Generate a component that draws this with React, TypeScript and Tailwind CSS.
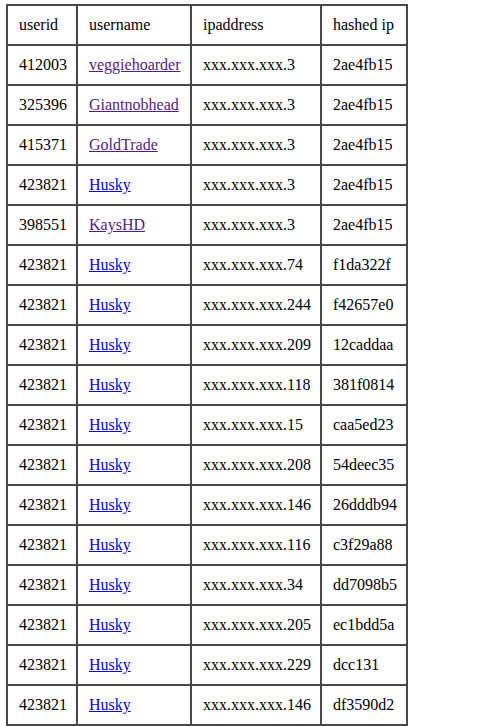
type Row = {
  userid: string;
  username: string;
  visited: boolean;
  ip: string;
  hash: string;
};

const rows: Row[] = [
  { userid: '412003', username: 'veggiehoarder', visited: true, ip: 'xxx.xxx.xxx.3', hash: '2ae4fb15' },
  { userid: '325396', username: 'Giantnobhead', visited: true, ip: 'xxx.xxx.xxx.3', hash: '2ae4fb15' },
  { userid: '415371', username: 'GoldTrade', visited: true, ip: 'xxx.xxx.xxx.3', hash: '2ae4fb15' },
  { userid: '423821', username: 'Husky', visited: false, ip: 'xxx.xxx.xxx.3', hash: '2ae4fb15' },
  { userid: '398551', username: 'KaysHD', visited: true, ip: 'xxx.xxx.xxx.3', hash: '2ae4fb15' },
  { userid: '423821', username: 'Husky', visited: false, ip: 'xxx.xxx.xxx.74', hash: 'f1da322f' },
  { userid: '423821', username: 'Husky', visited: false, ip: 'xxx.xxx.xxx.244', hash: 'f42657e0' },
  { userid: '423821', username: 'Husky', visited: false, ip: 'xxx.xxx.xxx.209', hash: '12caddaa' },
  { userid: '423821', username: 'Husky', visited: false, ip: 'xxx.xxx.xxx.118', hash: '381f0814' },
  { userid: '423821', username: 'Husky', visited: false, ip: 'xxx.xxx.xxx.15', hash: 'caa5ed23' },
  { userid: '423821', username: 'Husky', visited: false, ip: 'xxx.xxx.xxx.208', hash: '54deec35' },
  { userid: '423821', username: 'Husky', visited: false, ip: 'xxx.xxx.xxx.146', hash: '26dddb94' },
  { userid: '423821', username: 'Husky', visited: false, ip: 'xxx.xxx.xxx.116', hash: 'c3f29a88' },
  { userid: '423821', username: 'Husky', visited: false, ip: 'xxx.xxx.xxx.34', hash: 'dd7098b5' },
  { userid: '423821', username: 'Husky', visited: false, ip: 'xxx.xxx.xxx.205', hash: 'ec1bdd5a' },
  { userid: '423821', username: 'Husky', visited: false, ip: 'xxx.xxx.xxx.229', hash: 'dcc131' },
  { userid: '423821', username: 'Husky', visited: false, ip: 'xxx.xxx.xxx.146', hash: 'df3590d2' },
];

const cell = 'border-2 border-[#474747] px-[11px] h-[40px] align-middle text-left font-normal';

export default function App() {
  return (
    <div className="bg-white min-h-screen pt-[4px] pl-[6px] text-black text-[16px] font-['Liberation_Serif',serif]">
      <table className="border-collapse border-2 border-[#474747] w-[400px] table-fixed">
        <colgroup>
          <col className="w-[70px]" />
          <col className="w-[114px]" />
          <col className="w-[130px]" />
          <col className="w-[86px]" />
        </colgroup>
        <thead>
          <tr>
            <th className={cell}>userid</th>
            <th className={cell}>username</th>
            <th className={cell}>ipaddress</th>
            <th className={cell}>hashed ip</th>
          </tr>
        </thead>
        <tbody>
          {rows.map((r, i) => (
            <tr key={i}>
              <td className={cell}>{r.userid}</td>
              <td className={cell}>
                <a
                  href="#"
                  className={r.visited ? 'underline text-[#551a8b]' : 'underline text-[#0000ee]'}
                >
                  {r.username}
                </a>
              </td>
              <td className={cell}>{r.ip}</td>
              <td className={cell}>{r.hash}</td>
            </tr>
          ))}
        </tbody>
      </table>
    </div>
  );
}
